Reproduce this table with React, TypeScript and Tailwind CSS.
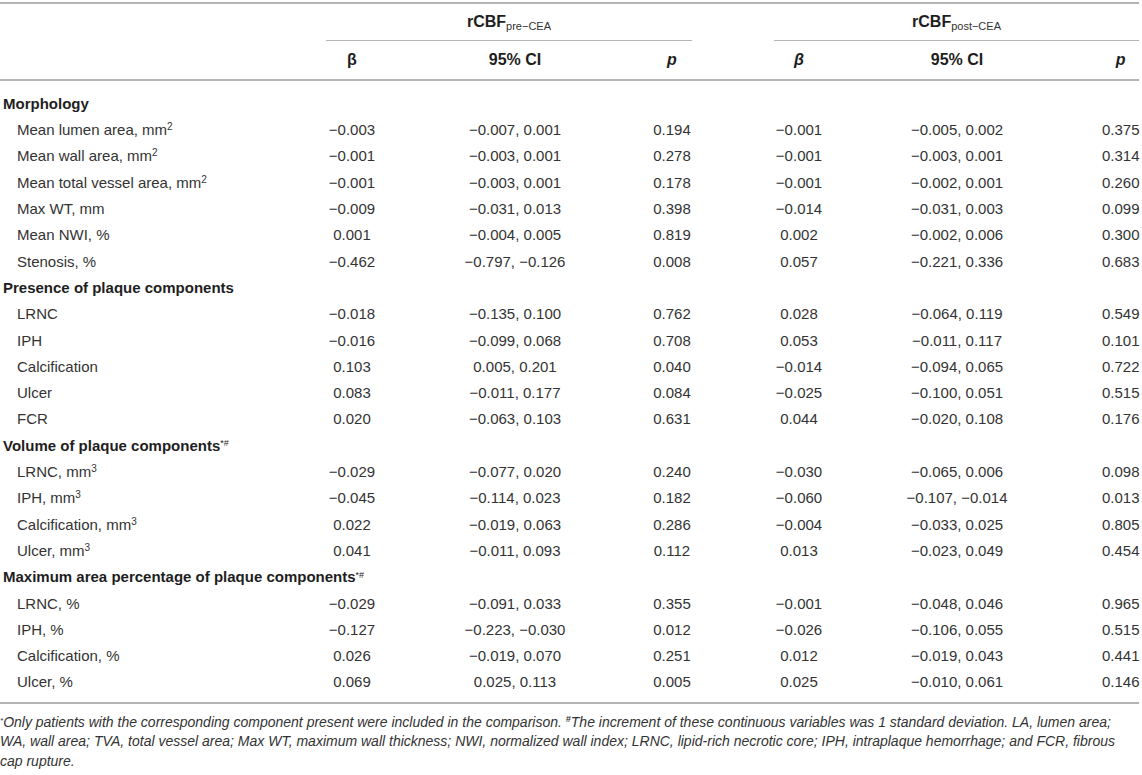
type Row =
  | { kind: 'section'; label: string; mark?: boolean }
  | { kind: 'row'; label: string; sup?: string; v: string[] };

const rows: Row[] = [
  { kind: 'section', label: 'Morphology' },
  { kind: 'row', label: 'Mean lumen area, mm', sup: '2', v: ['−0.003', '−0.007, 0.001', '0.194', '−0.001', '−0.005, 0.002', '0.375'] },
  { kind: 'row', label: 'Mean wall area, mm', sup: '2', v: ['−0.001', '−0.003, 0.001', '0.278', '−0.001', '−0.003, 0.001', '0.314'] },
  { kind: 'row', label: 'Mean total vessel area, mm', sup: '2', v: ['−0.001', '−0.003, 0.001', '0.178', '−0.001', '−0.002, 0.001', '0.260'] },
  { kind: 'row', label: 'Max WT, mm', v: ['−0.009', '−0.031, 0.013', '0.398', '−0.014', '−0.031, 0.003', '0.099'] },
  { kind: 'row', label: 'Mean NWI, %', v: ['0.001', '−0.004, 0.005', '0.819', '0.002', '−0.002, 0.006', '0.300'] },
  { kind: 'row', label: 'Stenosis, %', v: ['−0.462', '−0.797, −0.126', '0.008', '0.057', '−0.221, 0.336', '0.683'] },
  { kind: 'section', label: 'Presence of plaque components' },
  { kind: 'row', label: 'LRNC', v: ['−0.018', '−0.135, 0.100', '0.762', '0.028', '−0.064, 0.119', '0.549'] },
  { kind: 'row', label: 'IPH', v: ['−0.016', '−0.099, 0.068', '0.708', '0.053', '−0.011, 0.117', '0.101'] },
  { kind: 'row', label: 'Calcification', v: ['0.103', '0.005, 0.201', '0.040', '−0.014', '−0.094, 0.065', '0.722'] },
  { kind: 'row', label: 'Ulcer', v: ['0.083', '−0.011, 0.177', '0.084', '−0.025', '−0.100, 0.051', '0.515'] },
  { kind: 'row', label: 'FCR', v: ['0.020', '−0.063, 0.103', '0.631', '0.044', '−0.020, 0.108', '0.176'] },
  { kind: 'section', label: 'Volume of plaque components', mark: true },
  { kind: 'row', label: 'LRNC, mm', sup: '3', v: ['−0.029', '−0.077, 0.020', '0.240', '−0.030', '−0.065, 0.006', '0.098'] },
  { kind: 'row', label: 'IPH, mm', sup: '3', v: ['−0.045', '−0.114, 0.023', '0.182', '−0.060', '−0.107, −0.014', '0.013'] },
  { kind: 'row', label: 'Calcification, mm', sup: '3', v: ['0.022', '−0.019, 0.063', '0.286', '−0.004', '−0.033, 0.025', '0.805'] },
  { kind: 'row', label: 'Ulcer, mm', sup: '3', v: ['0.041', '−0.011, 0.093', '0.112', '0.013', '−0.023, 0.049', '0.454'] },
  { kind: 'section', label: 'Maximum area percentage of plaque components', mark: true },
  { kind: 'row', label: 'LRNC, %', v: ['−0.029', '−0.091, 0.033', '0.355', '−0.001', '−0.048, 0.046', '0.965'] },
  { kind: 'row', label: 'IPH, %', v: ['−0.127', '−0.223, −0.030', '0.012', '−0.026', '−0.106, 0.055', '0.515'] },
  { kind: 'row', label: 'Calcification, %', v: ['0.026', '−0.019, 0.070', '0.251', '0.012', '−0.019, 0.043', '0.441'] },
  { kind: 'row', label: 'Ulcer, %', v: ['0.069', '0.025, 0.113', '0.005', '0.025', '−0.010, 0.061', '0.146'] },
];

function DataRow({ r }: { r: Extract<Row, { kind: 'row' }> }) {
  return (
    <tr className="h-[26.3px]">
      <td className="pl-[17px] whitespace-nowrap">
        {r.label}
        {r.sup && <sup className="text-[10px]">{r.sup}</sup>}
      </td>
      <td className="text-center whitespace-nowrap">{r.v[0]}</td>
      <td className="text-center whitespace-nowrap">{r.v[1]}</td>
      <td className="text-center whitespace-nowrap">{r.v[2]}</td>
      <td />
      <td className="text-center whitespace-nowrap">{r.v[3]}</td>
      <td className="text-center whitespace-nowrap">{r.v[4]}</td>
      <td className="pl-[12px] text-center whitespace-nowrap">{r.v[5]}</td>
    </tr>
  );
}

export default function App() {
  return (
    <div className="min-h-[775px] w-[1142px] bg-white pt-[2px] font-['Liberation_Sans',Arial,sans-serif] text-[15px] text-[#333]">
      <table className="w-[1139px] table-fixed border-collapse border-t-2 border-[#b4b4b4]">
        <colgroup>
          <col className="w-[326px]" />
          <col className="w-[52px]" />
          <col className="w-[274px]" />
          <col className="w-[40px]" />
          <col className="w-[82px]" />
          <col className="w-[50px]" />
          <col className="w-[266px]" />
          <col className="w-[49px]" />
        </colgroup>
        <thead className="text-[16px] font-bold text-[#1e1e1e]">
          <tr className="h-[37px]">
            <th />
            <th colSpan={3} className="border-b border-[#b4b4b4] text-center font-bold">
              rCBF<sub className="text-[11px] font-normal text-[#333]">pre−CEA</sub>
            </th>
            <th />
            <th colSpan={3} className="border-b border-[#b4b4b4] text-center font-bold">
              rCBF<sub className="text-[11px] font-normal text-[#333]">post−CEA</sub>
            </th>
          </tr>
          <tr className="h-[40px] border-b-2 border-[#b4b4b4]">
            <th />
            <th className="text-center font-bold">β</th>
            <th className="text-center font-bold">95% CI</th>
            <th className="text-center font-bold italic">p</th>
            <th />
            <th className="text-center font-bold italic">β</th>
            <th className="text-center font-bold">95% CI</th>
            <th className="pl-[12px] text-center font-bold italic">p</th>
          </tr>
        </thead>
        <tbody>
          <tr className="h-[11px]">
            <td colSpan={8} />
          </tr>
          {rows.map((r, i) =>
            r.kind === 'section' ? (
              <tr key={i} className="h-[26.3px]">
                <td colSpan={8} className="pl-[3px] font-bold whitespace-nowrap text-[#1e1e1e]">
                  {r.label}
                  {r.mark && <sup className="text-[9px] font-normal">*#</sup>}
                </td>
              </tr>
            ) : (
              <DataRow key={i} r={r} />
            )
          )}
          <tr className="h-[7px] border-b-2 border-[#b4b4b4]">
            <td colSpan={8} />
          </tr>
        </tbody>
      </table>
      <p className="w-[1139px] pt-[9px] text-[14px] leading-[19.5px] italic text-[#333]">
        <sup className="text-[8px] leading-none">*</sup>Only patients with the corresponding component present were
        included in the comparison. <sup className="text-[9px] leading-none font-bold">#</sup>The increment of these
        continuous variables was 1 standard deviation. LA, lumen area; WA, wall area; TVA, total vessel area; Max WT,
        maximum wall thickness; NWI, normalized wall index; LRNC, lipid-rich necrotic core; IPH, intraplaque hemorrhage;
        and FCR, fibrous cap rupture.
      </p>
    </div>
  );
}
